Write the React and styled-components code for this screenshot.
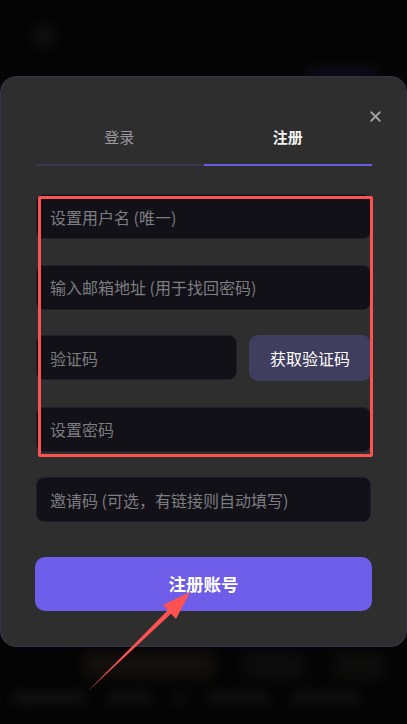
import React, { useState } from 'react'
import styled, { createGlobalStyle } from 'styled-components'
import { X } from 'lucide-react'

const GlobalStyle = createGlobalStyle`
  body {
    margin: 0;
    background: #060606;
    font-family: "Noto Sans CJK SC", "Noto Sans", sans-serif;
  }
  * { box-sizing: border-box; }
`

const Screen = styled.div`
  position: relative;
  width: 407px;
  height: 724px;
  overflow: hidden;
  background: #050505;
  padding-top: 76px;
`

// blurred page behind the dialog
const Backdrop = styled.div`
  position: absolute;
  inset: 0;
  display: flex;
  flex-direction: column;
  justify-content: space-between;
  filter: blur(6px);
  pointer-events: none;
`

const TopBar = styled.div`
  display: flex;
  justify-content: space-between;
  align-items: flex-end;
  padding: 26px 30px 0 34px;
  height: 76px;
`

const Blob = styled.div`
  width: ${({ w }) => w}px;
  height: ${({ h }) => h}px;
  border-radius: ${({ r }) => r ?? 6}px;
  background: ${({ c }) => c};
  align-self: ${({ top }) => (top ? 'flex-start' : 'auto')};
`

const BottomArea = styled.div`
  display: flex;
  flex-direction: column;
  gap: 16px;
  padding: 0 14px 22px;
`

const BlobRow = styled.div`
  display: flex;
  gap: ${({ gap }) => gap}px;
  align-items: center;
  padding-left: ${({ pl }) => pl ?? 0}px;
`

const Modal = styled.div`
  position: relative;
  height: 571px;
  background: #2e2e2f;
  border: 1px solid #35334b;
  border-radius: 16px;
  padding: 45px 34px 0;
`

const Close = styled.button`
  position: absolute;
  top: 31px;
  right: 22px;
  border: 0;
  background: none;
  padding: 0;
  color: #a3a3a6;
  display: flex;
`

const Tabs = styled.div`
  display: flex;
`

const Tab = styled.div`
  flex: 1;
  text-align: center;
  font-size: 15px;
  line-height: 22px;
  padding: 4px 0 16px;
  color: ${({ active }) => (active ? '#f2f2f2' : '#9a9a9e')};
  font-weight: ${({ active }) => (active ? 700 : 400)};
  border-bottom: 2px solid ${({ active }) => (active ? '#6b5ce6' : '#3a3652')};
`

const Form = styled.div`
  display: flex;
  flex-direction: column;
  gap: 25.5px;
  margin-top: 28px;
  padding: 0 1px 0 1px;
`

const Input = styled.input`
  width: 100%;
  height: 45px;
  min-width: 0;
  background: #121117;
  border: 1px solid #1f1e29;
  border-radius: 8px;
  padding: 0 13px;
  color: #eee;
  font-family: inherit;
  font-size: 16px;
  outline: none;
  &::placeholder {
    color: #7d7d82;
  }
`

const CodeRow = styled.div`
  display: flex;
  gap: 12px;
`

const CodeButton = styled.button`
  flex: 0 0 122px;
  height: 46px;
  border: 0;
  border-radius: 9px;
  background: #403e5e;
  color: #fff;
  font-family: inherit;
  font-size: 16px;
`

const Submit = styled.button`
  width: calc(100% + 2px);
  margin: 9px -1px 0;
  height: 54px;
  border: 0;
  border-radius: 10px;
  background: #6d5de8;
  color: #fff;
  font-family: inherit;
  font-size: 17.5px;
  font-weight: 700;
`

const Annotation = styled.div`
  position: absolute;
  left: 38px;
  top: 196px;
  width: 335px;
  height: 261px;
  border: 3px solid #fe5252;
  border-radius: 2px;
  pointer-events: none;
`

const Arrow = styled.svg`
  position: absolute;
  left: 0;
  top: 0;
  pointer-events: none;
`

export default function App() {
  const [tab, setTab] = useState('register')
  return (
    <>
      <GlobalStyle />
      <Screen>
        <Backdrop>
          <TopBar>
            <Blob w={20} h={20} r={10} c="#111" top />
            <Blob w={70} h={6} r={8} c="#15112a" />
          </TopBar>
          <BottomArea>
            <BlobRow gap={30} pl={70}>
              <Blob w={130} h={26} c="#130f0c" />
              <Blob w={60} h={26} c="#0b0c0b" />
              <Blob w={50} h={26} c="#0c0d0b" />
            </BlobRow>
            <BlobRow gap={24}>
              <Blob w={70} h={8} c="#171717" />
              <Blob w={42} h={8} c="#151515" />
              <Blob w={10} h={8} c="#141414" />
              <Blob w={60} h={8} c="#161616" />
              <Blob w={66} h={8} c="#151515" />
            </BlobRow>
          </BottomArea>
        </Backdrop>

        <Modal>
          <Close aria-label="关闭">
            <X size={17} strokeWidth={2.6} />
          </Close>
          <Tabs>
            <Tab active={tab === 'login'} onClick={() => setTab('login')}>登录</Tab>
            <Tab active={tab === 'register'} onClick={() => setTab('register')}>注册</Tab>
          </Tabs>
          <Form>
            <Input placeholder="设置用户名 (唯一)" />
            <Input placeholder="输入邮箱地址 (用于找回密码)" />
            <CodeRow>
              <Input placeholder="验证码" />
              <CodeButton>获取验证码</CodeButton>
            </CodeRow>
            <Input type="password" placeholder="设置密码" />
            <Input placeholder="邀请码 (可选，有链接则自动填写)" />
            <Submit>注册账号</Submit>
          </Form>
        </Modal>

        <Annotation />
        <Arrow width="407" height="724" viewBox="0 0 407 724">
          <polygon points="87,692 171,607 174,611" fill="#fe5252" />
          <polygon points="190,592 163,605 176,619" fill="#fe5252" />
        </Arrow>
      </Screen>
    </>
  )
}
